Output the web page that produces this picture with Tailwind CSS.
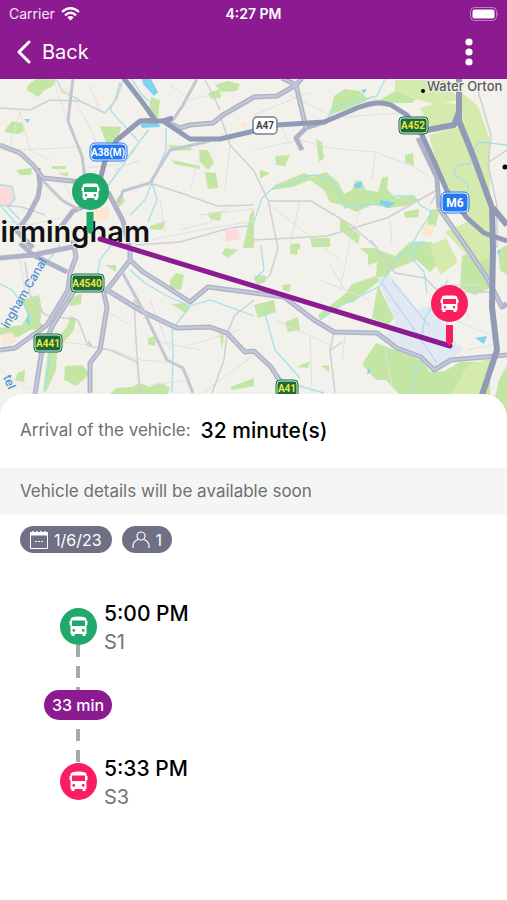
<!DOCTYPE html>
<html lang="en">
<head>
    <meta charset="UTF-8">
    <meta name="viewport" content="width=device-width, initial-scale=1.0">
    <title>Trip Details</title>
    <script src="https://cdn.jsdelivr.net/npm/@tailwindcss/browser@4"></script>
</head>
<body class="bg-white min-h-screen font-['Inter',sans-serif] text-black">

    <!-- Shared bus icons -->
    <svg class="hidden">
        <symbol id="bus" viewBox="0 0 37 37">
            <circle cx="18.500" cy="18.500" r="18.500" fill="currentColor"/>
            <path fill="#fff" fill-rule="evenodd" d="M10.500 11.500Q10.500 8.500 18.500 8.500T26.500 11.500V13H27.500V17H26.500V26H25.500V28H22.500V26H14.500V28H11.500V26H10.500V17H9.500V13H10.500ZM12 12.500V18H25V12.500ZM13.800 21A1.400 1.400 0 1 0 13.800 23.800A1.400 1.400 0 1 0 13.800 21ZM23.200 21A1.400 1.400 0 1 0 23.200 23.800A1.400 1.400 0 1 0 23.200 21Z"/>
        </symbol>
        <symbol id="bus-pin" viewBox="0 0 37 37">
            <circle cx="18.500" cy="18.500" r="18.500" fill="currentColor"/>
            <path fill="#fff" fill-rule="evenodd" d="M10.500 13.500Q10.500 10.500 14 10.500H23Q26.500 10.500 26.500 13.500V14.500H27.500V18H26.500V25H25.500V27H22.500V25H14.500V27H11.500V25H10.500V18H9.500V14.500H10.500ZM12 14V19H25V14ZM14 21A1.200 1.200 0 1 0 14 23.400A1.200 1.200 0 1 0 14 21ZM23 21A1.200 1.200 0 1 0 23 23.400A1.200 1.200 0 1 0 23 21Z"/>
        </symbol>
    </svg>

    <!-- Header -->
    <header class="bg-[#8c1a91] text-white">
        <div class="grid grid-cols-3 items-center h-7 px-2 text-sm">
            <div class="flex items-center gap-1.5 pl-px text-white/90">
                Carrier
                <svg class="w-[19px] h-[14px]" viewBox="0 0 19 14" fill="none" stroke="#fff" stroke-width="2.300">
                    <path d="M1 5Q9.500 -2.500 18 5"/>
                    <path d="M4 8.300Q9.500 3.300 15 8.300"/>
                    <path d="M6.300 10.300Q9.500 7.700 12.700 10.300L9.500 13.600Z" fill="#fff" stroke="none"/>
                </svg>
            </div>
            <div class="text-center font-semibold">4:27 PM</div>
            <svg class="justify-self-end w-[29px] h-[14px]" viewBox="0 0 29 14">
                <rect x="0.500" y="0.500" width="26" height="13" rx="4" fill="none" stroke="#fff" stroke-opacity=".45"/>
                <rect x="2.500" y="2.500" width="22" height="9" rx="2" fill="#fff"/>
                <path d="M27.500 5Q29 7 27.500 9Z" fill="#fff" fill-opacity=".6"/>
            </svg>
        </div>
        <div class="flex items-center justify-between h-[51px] pl-4 pr-[30px] pb-1">
            <a href="#" class="flex items-center gap-2.5 text-xl">
                <svg class="w-4 h-6" viewBox="0 0 16 24" fill="none" stroke="#fff" stroke-width="3" stroke-linecap="round" stroke-linejoin="round"><path d="M13 2L3 12L13 22"/></svg>
                Back
            </a>
            <button type="button" aria-label="More options">
                <svg class="w-4 h-7" viewBox="0 0 16 28" fill="#fff"><circle cx="8" cy="4" r="3.600"/><circle cx="8" cy="14" r="3.600"/><circle cx="8" cy="24" r="3.600"/></svg>
            </button>
        </div>
    </header>

    <!-- Map -->
    <svg class="block w-full h-[341px] bg-[#f2f1ec]" viewBox="0 79 507 341" preserveAspectRatio="xMidYMid slice">
        <!-- Parks -->
        <g fill="#c4e6a5">
            <path d="M28 85L36 79H57L52 87L45 90L38 97L27 90ZM5 130L12 121L22 123L24 131L18 134L5 132ZM100 126L121 127L118 140L107 146ZM151 97L160 100L158 118L148 116ZM16 170L32 168L31 175H20ZM199 150L208 150L214 163L208 170L200 162ZM205 172L216 173L218 188L208 189ZM208 213L222 211L220 221L210 219ZM215 85L228 81L240 84L237 91L222 92ZM208 93L220 89L221 98L211 99Z"/>
            <path d="M52 166H66V169H52ZM58 174L68 172V177ZM116 200L122 193L125 201L118 208ZM172 160L200 166V169L174 164ZM168 145L190 146L192 150L172 151ZM150 226L166 221L162 230L150 229ZM250 215L254 208V248H243Z"/>
            <path d="M21 300L39 295L42 310L40 322L46 328L30 330L20 336L8 340L0 336V328L22 325L28 315ZM69 298L82 294L81 304L70 306ZM60 335L68 325L70 316L76 318L74 330L62 344ZM49 345L58 340L56 370L46 392L43 391ZM65 366L82 365L90 374L76 386L64 380ZM18 373L25 370L24 382L15 380ZM110 394L116 388L132 387L140 383L150 387L160 382L170 388L168 394ZM170 280L176 273L184 275L181 290L170 288ZM148 338L156 336L155 346L148 344ZM171 304L184 303L190 308L186 313ZM105 265H116V272ZM230 387L254 378V386L232 390ZM225 248L238 250L228 258L222 254ZM219 328L224 335L222 350Z"/>
            <path d="M334 96L345 89L360 91L367 98L380 100L400 88L418 97L412 103L392 103L370 99L350 108L330 115ZM275 185L292 178L304 173L312 177L326 172L338 182L344 194L352 190L356 180L362 182L366 190L378 192L382 178L388 176L387 189L396 198L412 196L420 200L410 205L390 208L372 205L356 212L345 206L330 202L324 190L310 180L293 187L272 190ZM316 139L322 142L324 158L319 162ZM275 156L290 155L285 166L276 165ZM405 155L413 153L414 166L405 162ZM404 212L419 209L418 217L405 218ZM260 170L270 173L260 179ZM291 244H300V249H290Z"/>
            <path d="M360 248H374L395 256L410 242H432L440 262L430 272L417 260L404 265L392 270L385 280L375 284L354 302L342 304L320 320L318 315L345 294L352 284L376 276L377 262L368 265V255Z"/>
            <path d="M378 285L394 318L388 325L372 318ZM362 364L376 343L402 352L422 361L430 372L445 371L460 362H490V395H400L386 380L376 380ZM285 322L298 317L300 330L288 332ZM254 276L265 275L266 282L256 284ZM282 285L291 284L290 292L283 290ZM254 305L274 300L276 312L258 318ZM296 367L310 361L308 368ZM321 366L329 365V372ZM291 244L298 243L297 255L290 254Z"/>
            <path d="M462 256L482 246L490 250V288L475 295L460 288ZM498 250L507 245V275L500 270ZM499 380L507 365V420H490ZM340 218L360 235L358 244L340 230ZM310 238H330V247H312ZM430 210L440 208L436 225L425 234Z"/>
        </g>
        <g fill="#d5ebae">
            <path d="M420 108L440 102L457 104V124L432 128ZM429 135L459 127L474 165L489 210L490 235L464 215L450 192L436 160ZM461 92L478 106L490 140V200L480 178L463 128ZM445 232L467 222L492 236V258L475 262L462 250Z"/>
            <path d="M395 80H448L458 100L436 104L410 98L395 90ZM468 365L490 358L485 395H450ZM430 245L446 238L458 262L440 275Z"/>
        </g>
        <g fill="#fadada">
            <path d="M0 186L12 187L16 200L8 208L0 204ZM225 230L238 229L240 239L226 242Z"/>
            <path fill="#fbe8cf" d="M60 88H70V95H61ZM422 226L434 224L432 236H422ZM237 124L247 122L245 129ZM88 212L108 206L110 218L94 222Z"/>
            <path fill="#f7e7dc" d="M0 335L12 332L17 342L4 347Z"/>
        </g>
        <!-- Airport -->
        <path fill="#dfe8f3" d="M377 277L391 276L417 309L431 306L452 338L463 349L450 362L434 373L420 356L384 337L396 322Z"/>
        <path d="M382 283L437 363M392 281L430 327" fill="none" stroke="#c3cad9"/>
        <!-- Water -->
        <g fill="none" stroke="#a5e0ea" stroke-width="1.300">
            <path d="M57 80L62 91L80 100M120 82L115 100L110 110L138 141M131 78L142 95L152 104M148 130L130 155L105 190M166 128V150L155 175L145 200L130 215M152 182L157 200L148 222M0 205L20 228M0 185L12 186L15 198L8 207L20 220M0 284L12 290L24 305L32 320M115 240L100 260L95 290M130 270L145 283L165 295L190 306L172 330L173 350L172 393M190 306L210 300L254 316M60 245L45 265M50 345L46 390"/>
            <path d="M254 222L262 198L275 186L292 184L306 176L319 175L334 182L345 208L360 205L380 204L396 196L414 196L420 205L432 212L420 230L410 248M385 79L377 96L360 100L332 108L325 125M410 243L424 242L412 252L415 262L424 272L427 293M410 248L395 260L386 275L380 286L355 299L340 306L320 320M507 145L480 142L475 147L470 164L456 166L454 174L468 184V195M261 245L264 270L254 280M264 310L275 350L300 378M331 350L342 342M448 280L425 318L422 335M421 362L414 375L413 393M254 350L285 382L324 393"/>
        </g>
        <path fill="#7fd3ee" d="M142 79H151L158 92L154 96L143 84ZM140 124L158 122L160 127L142 128ZM24 119L30 119L28 123ZM28 312L30 326L26 322ZM354 184L362 181L361 188H355ZM380 200L396 203L388 208L380 204ZM361 90L367 89L364 94ZM475 338L487 336L484 344ZM497 251L501 250L498 255ZM368 368L371 372L367 374ZM88 340L93 347L89 345Z"/>
        <!-- Minor streets -->
        <g fill="none" stroke="#e0e0e1" stroke-width="1">
            <path d="M0 150L40 149L82 147M53 79L68 121M20 112L30 150L50 160M75 100L88 125L100 150M85 168L120 164L150 130M90 85L100 112M170 85L190 100L210 95M200 215L254 209M180 230L210 222L230 205M125 245L150 240L200 230L254 221M115 170L140 160M200 155L190 190M230 145L225 190M20 110L10 145M60 170L72 200M0 220L30 225L60 218M160 200L165 230M254 150L300 140L330 148L375 152L410 165L430 177M280 125L290 145M375 152L372 180M330 118L400 113M290 95L340 120M254 115L310 92M270 205L340 260M300 201L290 245M360 210L350 240L340 290M390 220L392 245M330 265L345 290M320 280L370 300M275 320L330 345M310 335L312 393M345 335L342 360M385 350L392 385M440 285H480M455 285L470 320M455 320L490 335M468 350L492 345M0 370L30 390M45 340L90 345M113 350L140 360L167 362M105 310L130 325M152 340L200 350M190 345L240 330M200 395L254 355M150 385L190 380M20 260L25 290M150 300L170 350M165 260L210 270"/>
        </g>
        <g fill="none" stroke="#cfd0d5" stroke-width="1.500" stroke-linejoin="round">
            <path d="M0 108L30 110L50 100L80 101L105 113L117 98L122 82M205 80L213 95L220 110M220 115L230 145L254 171M150 183L187 195L217 206L254 205M0 205L22 207L45 215M135 245L180 242L230 228L254 225M254 171L268 200L278 248L270 275L254 288M268 201H311L351 225L377 248M254 240L327 236L387 218L437 190M440 190L430 204M371 240L395 273L425 278L437 290M452 292H492M478 91L491 135L488 165L497 205V248M489 162L507 150M334 332L330 350L335 393M25 262L30 295L45 315L78 320L88 346L110 350L137 362L140 393M143 312L134 300L136 340L140 393M227 333L224 360L212 393M254 300L235 315L227 333"/>
        </g>
        <!-- A roads -->
        <g fill="none" stroke="#aeb3c7" stroke-width="5" stroke-linejoin="round">
            <path d="M165 121L180 128L190 125L213 123L223 115L254 97L277 96L296 85L302 78M282 78L296 85L306 128L296 138L302 150M306 128L327 121M0 145L20 153L33 165L43 178L72 181L90 182M38 168L40 185L38 197L28 216L17 231L33 248M88 205L73 211L60 228M108 192L123 221L130 250V260L107 290L143 312L177 328L210 327L227 333L245 352L254 351L271 367L281 383M130 260L143 272L167 287L190 302L208 287L254 293L284 297L314 320L334 332L377 333L397 348L421 357L434 370L451 360L507 355M103 290L107 307L100 350L90 363V393M73 240L76 257L70 273L68 290L47 325L15 348L0 350M76 288L53 325L42 350L35 394M0 258L33 255L72 247M20 243L33 255L67 272M439 208L467 248L487 278L502 307L507 304M418 138L437 178L439 208"/>
            <path d="M73 78L68 121L82 156L85 178M197 79L183 105L173 120M43 181L63 201L80 210M118 203L123 191L150 183L170 150L210 141M122 272L143 310L167 360L183 368L193 393" stroke="#c3c6d3" stroke-width="3"/>
        </g>
        <g fill="none" stroke="#c5cad9" stroke-width="2" stroke-linejoin="round">
            <path d="M165 121L180 128L190 125L213 123L223 115L254 97L277 96L296 85L302 78M282 78L296 85L306 128M0 145L20 153L33 165L43 178L72 181M130 250V260L107 290L143 312L177 328L210 327L227 333L245 352L254 351L271 367L281 383M130 260L143 272L167 287L190 302L208 287L254 293L284 297L314 320L334 332L377 333L397 348L421 357L434 370L451 360L507 355M103 290L107 307L100 350L90 363V393M73 240L76 257L70 273L68 290L47 325L15 348L0 350M76 288L53 325L42 350L35 394M439 208L467 248L487 278L502 307"/>
        </g>
        <!-- Motorways -->
        <g fill="none" stroke="#929bb6" stroke-width="5" stroke-linejoin="round">
            <path d="M122 76L143 103L155 120L140 121L117 140L105 161L100 180M140 121L163 121L190 139H220L254 131L277 125L324 122L357 108Q377 100 391 105L407 115L421 133L434 161L447 191L467 218L484 233L507 241M163 121L173 118"/>
            <path d="M427 130L454 125L459 112M459 76V121L474 158L492 208L493 248L492 307L497 350L482 395M493 208L507 225" stroke-width="6"/>
        </g>
        <!-- Place names -->
        <g font-family="Inter, sans-serif" font-weight="600">
            <circle cx="423" cy="91" r="2"/><circle cx="505" cy="167" r="2.500"/>
            <text x="427" y="91" font-size="13" font-weight="500" fill="#5c5c5c" stroke="#f2f1ec" stroke-width="2" paint-order="stroke">Water Orton</text>
            <g font-size="12" font-weight="500" fill="#4b8fd0">
                <text transform="translate(8 329) rotate(-60)">ingham Canal</text>
                <text transform="translate(3 377) rotate(68)">tel</text>
            </g>
        </g>
        <text x="150" y="242" text-anchor="end" font-family="Inter, sans-serif" font-size="29" font-weight="600" fill="#111" stroke="#f2f1ec" stroke-width="2" paint-order="stroke">irmingham</text>
        <!-- Route -->
        <path d="M100 239L450 346" stroke="#8c1a91" stroke-width="5" stroke-linecap="round"/>
        <!-- Road shields -->
        <g font-family="Roboto, sans-serif" font-size="10" font-weight="700" text-anchor="middle">
            <g fill="#2478f2" stroke="#fff">
                <rect x="91" y="144" width="35" height="16" rx="4"/>
                <rect x="442" y="193" width="26" height="19" rx="4"/>
            </g>
            <g fill="none" stroke="#2478f2"><rect x="90" y="143" width="37" height="18" rx="5"/><rect x="441" y="192" width="28" height="21" rx="5"/></g>
            <text x="108" y="156">
                <tspan fill="#fff">A38(M)</tspan>
            </text>
            <text x="455" y="207" fill="#fff" font-size="12">M6</text>
            <rect x="253" y="117" width="24" height="17" rx="4" fill="#fff" stroke="#777d8b" stroke-width="1.500"/>
            <text x="265" y="129" fill="#444">A47</text>
            <g fill="#176b3c" stroke="#176b3c">
                <rect x="399" y="117" width="29" height="17" rx="4"/>
                <rect x="71" y="274" width="33" height="18" rx="4"/>
                <rect x="34" y="334" width="28" height="18" rx="4"/>
                <rect x="276" y="380" width="22" height="18" rx="4"/>
            </g>
            <g fill="none" stroke="#e5efe2">
                <rect x="400" y="118" width="27" height="15" rx="3"/>
                <rect x="72" y="275" width="31" height="16" rx="3"/>
                <rect x="35" y="335" width="26" height="16" rx="3"/>
                <rect x="277" y="381" width="20" height="16" rx="3"/>
            </g>
            <g fill="#f6e33a">
                <text x="413" y="129">A452</text>
                <text x="87" y="287">A4540</text>
                <text x="48" y="347">A441</text>
                <text x="287" y="392">A41</text>
            </g>
        </g>
        <!-- Stop pins -->
        <path d="M86.500 212H93.500V231L90 234L86.500 231Z" fill="#21a86b"/>
        <use href="#bus-pin" x="72" y="173" width="37" height="37" color="#21a86b"/>
        <path d="M446 325H453V342L449.500 346L446 342Z" fill="#fb1e5e"/>
        <use href="#bus-pin" x="431" y="285" width="37" height="37" color="#fb1e5e"/>
    </svg>

    <!-- Trip sheet -->
    <main class="relative -mt-[26px] bg-white rounded-t-3xl">
        <div class="flex items-center gap-2.5 h-[74px] px-5">
            <span class="text-[17px] text-[#6f6f6f]">Arrival of the vehicle:</span>
            <span class="text-[21px] font-medium">32 minute(s)</span>
        </div>
        <p class="flex items-center h-[47px] px-5 bg-[#f5f5f5] text-[17px] text-[#6f6f6f]">Vehicle details will be available soon</p>

        <div class="flex gap-2.5 px-5 pt-[11px] text-base text-white">
            <span class="flex items-center gap-1.5 h-[27px] px-2.5 rounded-full bg-[#6f7085]">
                <svg class="w-[18px] h-[18px]" viewBox="0 0 18 18" fill="none" stroke="#fff"><path d="M.500 1.500H17.500V17.500H.500Z"/><path d="M0 3H18" stroke-width="3"/><path d="M3 0V3M7 0V3M11 0V3M15 0V3" stroke-width="1.500"/><path d="M5 10.500H13" stroke-dasharray="2 1"/></svg>
                1/6/23
            </span>
            <span class="flex items-center gap-1.5 h-[27px] px-2.5 rounded-full bg-[#6f7085]">
                <svg class="w-[18px] h-[18px]" viewBox="0 0 18 18" fill="none" stroke="#fff" stroke-width="1.200"><circle cx="9" cy="5" r="4"/><path d="M1 17V15Q1 10.500 6 8.500M17 17V15Q17 10.500 12 8.500"/></svg>
                1
            </span>
        </div>

        <div class="grid grid-cols-[68px_1fr] pl-11 pt-[47px] pb-10">
            <div class="flex flex-col items-center pt-2 pb-[11px]">
                <svg class="w-[37px] h-[37px] text-[#21a86b]"><use href="#bus"/></svg>
                <svg class="w-1 h-[45px]" viewBox="0 0 4 45" stroke="#a9a9a9" stroke-width="4"><path d="M2 0V45" stroke-dasharray="12 9"/></svg>
                <span class="flex items-center justify-center h-[30px] w-full rounded-full bg-[#8c1a91] text-white text-base font-medium">33 min</span>
                <svg class="w-1 h-[43px]" viewBox="0 0 4 43" stroke="#a9a9a9" stroke-width="4"><path d="M2 9V43" stroke-dasharray="12 9"/></svg>
                <svg class="w-[37px] h-[37px] text-[#fb1e5e]"><use href="#bus"/></svg>
            </div>
            <div class="flex flex-col justify-between -ml-2">
                <div>
                    <h2 class="text-[21px] leading-7 font-medium">5:00 PM</h2>
                    <p class="text-xl leading-7 text-[#757575]">S1</p>
                </div>
                <div>
                    <h2 class="text-[21px] leading-7 font-medium">5:33 PM</h2>
                    <p class="text-xl leading-7 text-[#757575]">S3</p>
                </div>
            </div>
        </div>
    </main>

</body>
</html>
